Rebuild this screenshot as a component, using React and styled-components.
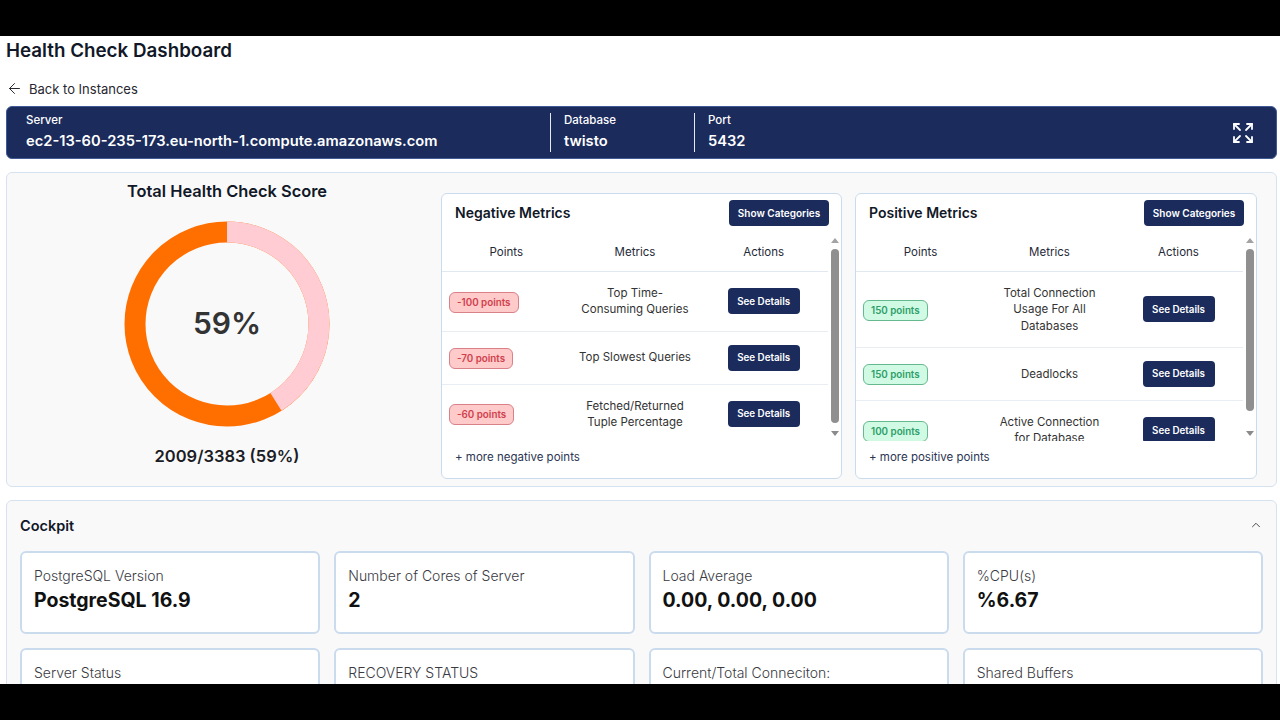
import React from 'react';
import styled, { createGlobalStyle } from 'styled-components';
import { ArrowLeft, ChevronUp, Expand } from 'lucide-react';

const NAVY = '#1a2b5c';

const negativeMetrics = [
  { points: '-100 points', name: 'Top Time-Consuming Queries' },
  { points: '-70 points', name: 'Top Slowest Queries' },
  { points: '-60 points', name: 'Fetched/Returned Tuple Percentage' },
];

const positiveMetrics = [
  { points: '150 points', name: 'Total Connection Usage For All Databases' },
  { points: '150 points', name: 'Deadlocks' },
  { points: '100 points', name: 'Active Connection for Database' },
];

const cockpitStats = [
  { label: 'PostgreSQL Version', value: 'PostgreSQL 16.9' },
  { label: 'Number of Cores of Server', value: '2' },
  { label: 'Load Average', value: '0.00, 0.00, 0.00' },
  { label: '%CPU(s)', value: '%6.67' },
  { label: 'Server Status' },
  { label: 'RECOVERY STATUS' },
  { label: 'Current/Total Conneciton:' },
  { label: 'Shared Buffers' },
];

const ScoreDonut = ({ percent }) => {
  const radius = 92;
  const circumference = 2 * Math.PI * radius;
  const restLength = circumference * (1 - percent / 100);
  return (
    <DonutWrapper>
      <svg width="206" height="206" viewBox="0 0 206 206">
        <g transform="rotate(-90 103 103)" fill="none" strokeWidth="21">
          <circle cx="103" cy="103" r={radius} stroke="#ff6f00" />
          <circle
            cx="103"
            cy="103"
            r={radius}
            stroke="#ffccd3"
            strokeDasharray={`${restLength} ${circumference}`}
          />
        </g>
      </svg>
      <DonutLabel>{percent}%</DonutLabel>
    </DonutWrapper>
  );
};

const MetricsCard = ({ title, metrics, tone, moreText, thumbHeight }) => (
  <MetricCard>
    <CardHeader>
      <CardTitle>{title}</CardTitle>
      <ShowCategoriesButton>Show Categories</ShowCategoriesButton>
    </CardHeader>
    <TableArea>
      <TableClip>
        <HeadRow>
          <HeadCell>Points</HeadCell>
          <HeadCell>Metrics</HeadCell>
          <HeadCell>Actions</HeadCell>
        </HeadRow>
        {metrics.map((metric) => (
          <MetricRow key={metric.name}>
            <div>
              <PointsBadge $tone={tone}>{metric.points}</PointsBadge>
            </div>
            <MetricName>{metric.name}</MetricName>
            <ActionCell>
              <SeeDetailsButton>See Details</SeeDetailsButton>
            </ActionCell>
          </MetricRow>
        ))}
      </TableClip>
      <ScrollTrack>
        <ArrowUp />
        <ScrollThumb $height={thumbHeight} />
        <ArrowDown />
      </ScrollTrack>
    </TableArea>
    <MoreLink>{moreText}</MoreLink>
  </MetricCard>
);

const App = () => (
  <>
    <GlobalStyle />
    <Letterbox>
      <Screen>
        <PageTitle>Health Check Dashboard</PageTitle>
        <BackLink>
          <ArrowLeft size={17} strokeWidth={1.4} />
          Back to Instances
        </BackLink>
        <ServerBanner>
          <ServerField $width={524}>
            <FieldLabel>Server</FieldLabel>
            <FieldValue>ec2-13-60-235-173.eu-north-1.compute.amazonaws.com</FieldValue>
          </ServerField>
          <ServerField $width={144} $divided>
            <FieldLabel>Database</FieldLabel>
            <FieldValue>twisto</FieldValue>
          </ServerField>
          <ServerField $width={144} $divided>
            <FieldLabel>Port</FieldLabel>
            <FieldValue>5432</FieldValue>
          </ServerField>
          <ExpandButton>
            <Expand size={24} strokeWidth={1.8} />
          </ExpandButton>
        </ServerBanner>
        <ScorePanel>
          <ScoreColumn>
            <ScoreTitle>Total Health Check Score</ScoreTitle>
            <ScoreDonut percent={59} />
            <ScoreTotal>2009/3383 (59%)</ScoreTotal>
          </ScoreColumn>
          <MetricsCard
            title="Negative Metrics"
            metrics={negativeMetrics}
            tone="negative"
            moreText="+ more negative points"
            thumbHeight={174}
          />
          <MetricsCard
            title="Positive Metrics"
            metrics={positiveMetrics}
            tone="positive"
            moreText="+ more positive points"
            thumbHeight={162}
          />
        </ScorePanel>
        <CockpitPanel>
          <CockpitHeader>
            <CockpitTitle>Cockpit</CockpitTitle>
            <ChevronUp size={14} strokeWidth={1.5} />
          </CockpitHeader>
          <StatGrid>
            {cockpitStats.map((stat) => (
              <StatCard key={stat.label}>
                <StatLabel>{stat.label}</StatLabel>
                <StatValue>{stat.value}</StatValue>
              </StatCard>
            ))}
          </StatGrid>
        </CockpitPanel>
      </Screen>
    </Letterbox>
  </>
);

const GlobalStyle = createGlobalStyle`
  html, body {
    margin: 0;
    padding: 0;
    background: #000;
  }
  body {
    font-family: Inter, "Liberation Sans", sans-serif;
  }
  * {
    box-sizing: border-box;
  }
`;

const Letterbox = styled('div')`
  background: #000;
  height: 720px;
  overflow: hidden;
  padding: 36px 0;
  width: 1280px;
`;

const Screen = styled('div')`
  background: #fff;
  display: flex;
  flex-direction: column;
  height: 648px;
  overflow: hidden;
  padding: 1px 3px 0 6px;
`;

const PageTitle = styled('h1')`
  color: #111827;
  font-size: 18.8px;
  font-weight: 600;
  line-height: 28px;
  margin: 0;
`;

const BackLink = styled('div')`
  align-items: center;
  color: #27272f;
  display: flex;
  font-size: 13px;
  gap: 6px;
  height: 20px;
  margin-top: 15px;
`;

const ServerBanner = styled('div')`
  align-items: stretch;
  background: ${NAVY};
  border: 1px solid #3f5a94;
  border-radius: 6px;
  color: #fff;
  display: flex;
  flex-shrink: 0;
  height: 53px;
  margin-top: 9px;
  padding: 6px 0 6px 19px;
`;

const ServerField = styled('div')`
  border-left: ${(props) => (props.$divided ? '1px solid #e5e9f2' : 'none')};
  display: flex;
  flex-direction: column;
  padding-left: ${(props) => (props.$divided ? '13px' : '0')};
  width: ${(props) => props.$width}px;
`;

const FieldLabel = styled('div')`
  font-size: 11.5px;
  font-weight: 500;
  line-height: 15px;
`;

const FieldValue = styled('div')`
  font-size: 14.7px;
  font-weight: 600;
  line-height: 20px;
  margin-top: 3px;
`;

const ExpandButton = styled('div')`
  align-items: center;
  display: flex;
  margin-left: auto;
  padding-right: 21px;
`;

const ScorePanel = styled('section')`
  background: #f9f9fa;
  border: 1px solid #d6e2ef;
  border-radius: 6px;
  display: grid;
  flex-shrink: 0;
  gap: 13px;
  grid-template-columns: 408px 401px 402px;
  height: 315px;
  margin-top: 13px;
  padding: 0 19px 0 13px;
`;

const ScoreColumn = styled('div')`
  align-items: center;
  display: flex;
  flex-direction: column;
  width: 414px;
`;

const ScoreTitle = styled('div')`
  color: #111827;
  font-size: 16.4px;
  font-weight: 600;
  line-height: 22px;
  margin-top: 7px;
`;

const DonutWrapper = styled('div')`
  height: 206px;
  margin-top: 19px;
  position: relative;
  width: 206px;
`;

const DonutLabel = styled('div')`
  color: #333;
  font-size: 30px;
  font-weight: 600;
  left: 0;
  line-height: 36px;
  position: absolute;
  right: 0;
  text-align: center;
  top: 84px;
`;

const ScoreTotal = styled('div')`
  color: #1c1c24;
  font-size: 16.5px;
  font-weight: 600;
  line-height: 22px;
  margin-top: 18px;
`;

const MetricCard = styled('div')`
  background: #fff;
  border: 1px solid #c9dcee;
  border-radius: 6px;
  display: flex;
  flex-direction: column;
  height: 286px;
  margin-top: 20px;
`;

const CardHeader = styled('div')`
  align-items: center;
  display: flex;
  flex-shrink: 0;
  height: 42px;
  justify-content: space-between;
  padding: 0 12px 4px 13px;
`;

const CardTitle = styled('div')`
  color: #111827;
  font-size: 14px;
  font-weight: 600;
  line-height: 16px;
  margin-top: -1px;
`;

const ShowCategoriesButton = styled('button')`
  background: ${NAVY};
  border: none;
  border-radius: 4px;
  color: #fff;
  font-family: inherit;
  font-size: 10px;
  font-weight: 600;
  height: 26px;
  padding: 0;
  width: 100px;
`;

const TableArea = styled('div')`
  display: flex;
  flex-shrink: 0;
  height: 205px;
`;

const TableClip = styled('div')`
  flex: 1;
  min-width: 0;
  overflow: hidden;
`;

const HeadRow = styled('div')`
  align-items: center;
  border-bottom: 1px solid #e2e8f0;
  display: grid;
  grid-template-columns: repeat(3, 1fr);
  height: 36px;
  padding-bottom: 3px;
`;

const HeadCell = styled('div')`
  color: #1f2937;
  font-size: 11.5px;
  font-weight: 400;
  text-align: center;
`;

const MetricRow = styled('div')`
  align-items: center;
  border-bottom: 1px solid #e8edf3;
  display: grid;
  grid-template-columns: repeat(3, 1fr);
  padding: 13px 0;
`;

const PointsBadge = styled('span')`
  background: ${(props) => (props.$tone === 'negative' ? '#fecaca' : '#d1fae5')};
  border: 1px solid ${(props) => (props.$tone === 'negative' ? '#d98088' : '#66b98f')};
  border-radius: 6px;
  color: ${(props) => (props.$tone === 'negative' ? '#d13f4c' : '#2e9e69')};
  display: inline-block;
  font-size: 9.8px;
  font-weight: 600;
  line-height: 19px;
  margin-left: 7px;
  padding: 0 7px;
`;

const MetricName = styled('div')`
  color: #333;
  font-size: 11.5px;
  line-height: 16.3px;
  padding: 0 6px;
  text-align: center;
`;

const ActionCell = styled('div')`
  display: flex;
  justify-content: center;
`;

const SeeDetailsButton = styled('button')`
  background: ${NAVY};
  border: none;
  border-radius: 4px;
  color: #fff;
  font-family: inherit;
  font-size: 9.8px;
  font-weight: 600;
  height: 26px;
  padding: 0;
  width: 72px;
`;

const ScrollTrack = styled('div')`
  align-items: center;
  display: flex;
  flex-direction: column;
  flex-shrink: 0;
  padding-top: 2px;
  width: 13px;
`;

const ArrowUp = styled('div')`
  border-bottom: 5px solid #a3a3a3;
  border-left: 4px solid transparent;
  border-right: 4px solid transparent;
  height: 0;
  width: 0;
`;

const ArrowDown = styled('div')`
  border-left: 4px solid transparent;
  border-right: 4px solid transparent;
  border-top: 5px solid #8a8a8a;
  height: 0;
  margin-top: auto;
  margin-bottom: 5px;
  width: 0;
`;

const ScrollThumb = styled('div')`
  background: #8f8f8f;
  border-radius: 4px;
  height: ${(props) => props.$height}px;
  margin-top: 6px;
  width: 8px;
`;

const MoreLink = styled('div')`
  color: #2c3553;
  font-size: 11.5px;
  font-weight: 400;
  line-height: 16px;
  padding: 8px 0 0 13px;
`;

const CockpitPanel = styled('section')`
  background: #f9f9fa;
  border: 1px solid #d6e2ef;
  border-radius: 6px;
  flex-shrink: 0;
  margin-top: 13px;
  padding: 0 13px 14px 13px;
`;

const CockpitHeader = styled('div')`
  align-items: center;
  color: #333;
  display: flex;
  height: 50px;
  justify-content: space-between;
  padding-bottom: 2px;
`;

const CockpitTitle = styled('div')`
  color: #111827;
  font-size: 14.5px;
  font-weight: 600;
`;

const StatGrid = styled('div')`
  display: grid;
  gap: 14px;
  grid-template-columns: repeat(4, 1fr);
`;

const StatCard = styled('div')`
  background: #fff;
  border: 2px solid #cbdbee;
  border-radius: 6px;
  height: 83px;
  padding: 13px 12px;
`;

const StatLabel = styled('div')`
  color: #3a3a42;
  font-size: 14px;
  font-weight: 300;
  line-height: 20px;
`;

const StatValue = styled('div')`
  color: #111;
  font-size: 19.5px;
  font-weight: 700;
  line-height: 28px;
`;

export default App;
